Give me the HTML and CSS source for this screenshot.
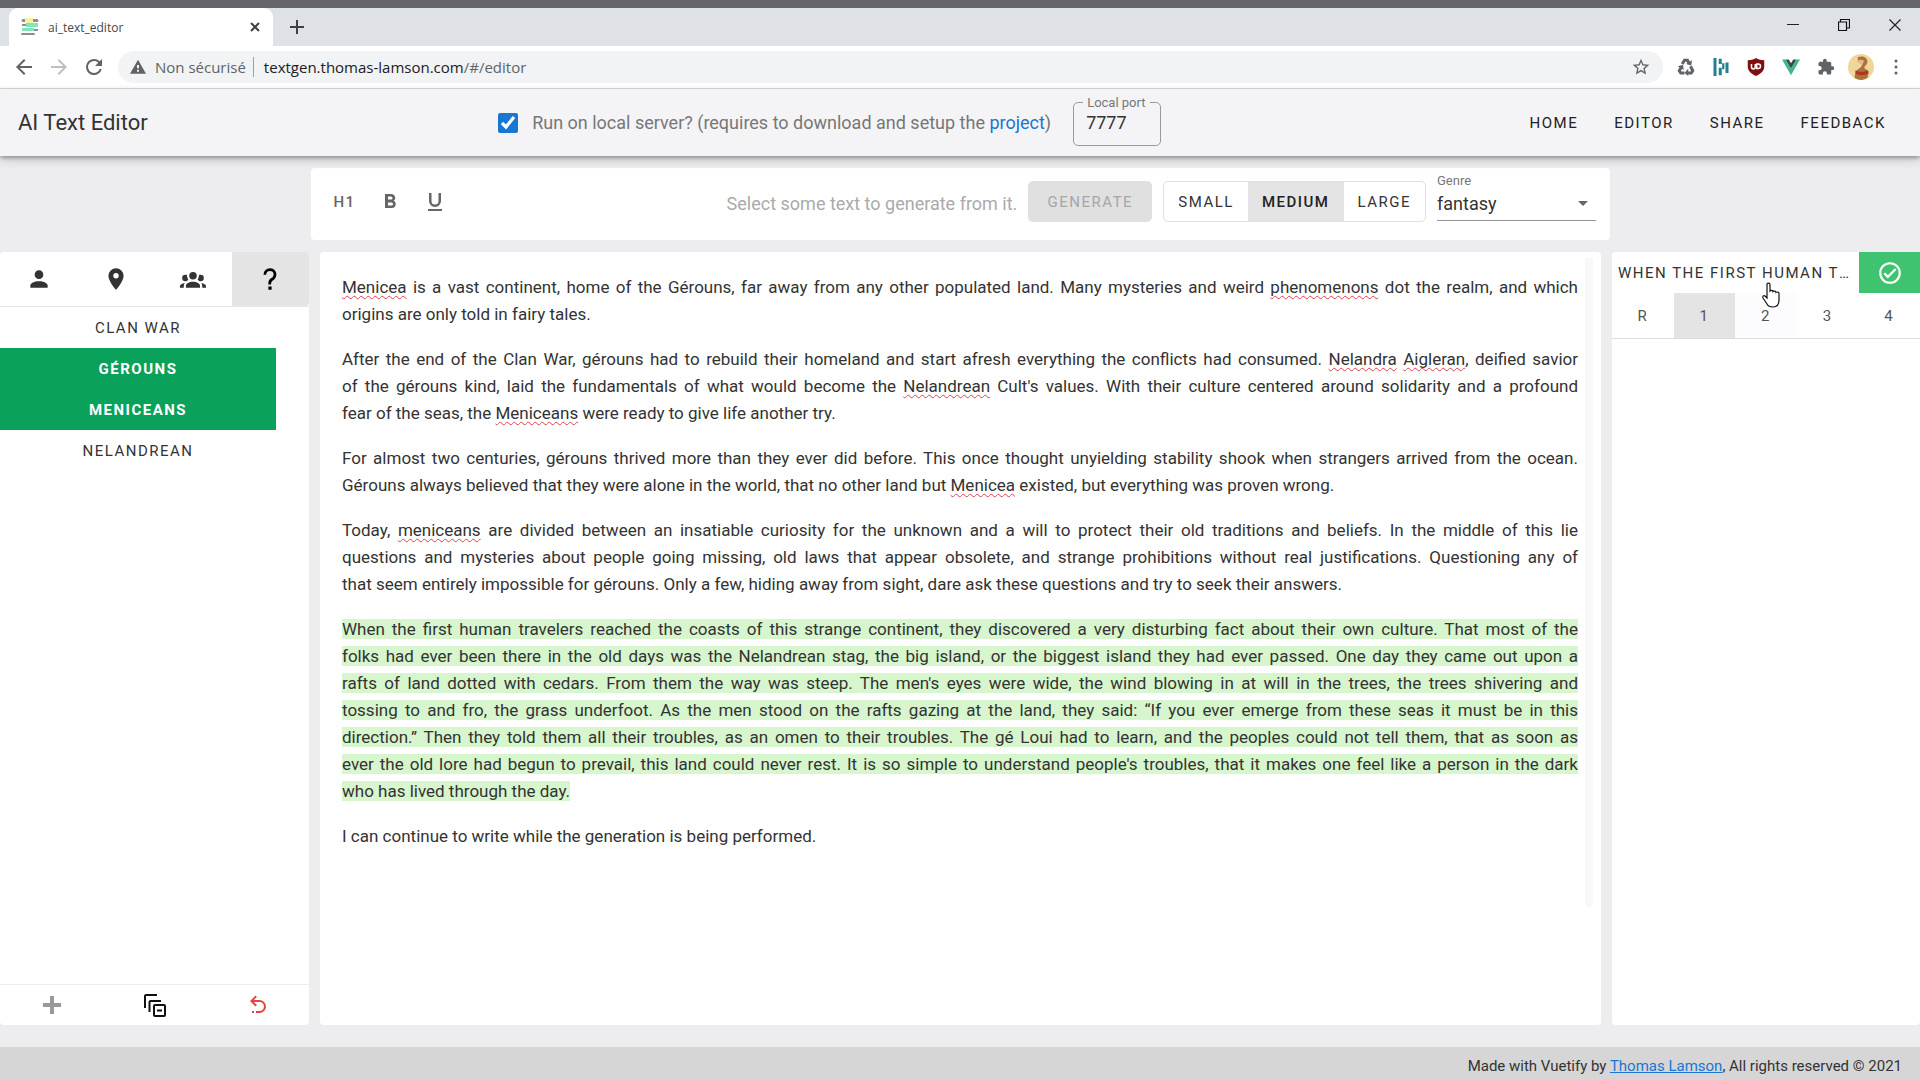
FILE: index.html
```
<!DOCTYPE html>
<html lang="en">
<head>
    <meta charset="UTF-8">
    <meta name="viewport" content="width=device-width, initial-scale=1.0">
    <title>ai_text_editor</title>
    <link rel="stylesheet" href="styles.css">
</head>
<body>

    <!-- Browser window -->
    <div class="browser">
        <div class="tab-strip">
            <div class="tab">
                <svg class="favicon" viewBox="0 0 18 18">
                    <path fill="#8d8f8f" d="M2 1h14a1 1 0 0 1 0 3H2a1 1 0 0 1 0-3zM1 6h15v2H1zM2 11h15v2H2zM1 15h12a1 1 0 0 1 0 2H1a1 1 0 0 1 0-2z"/>
                    <path fill="#f4f3a0" d="M4 0h8v5H4z"/>
                    <path fill="#7fe6bb" d="M5 5h12v4H5zM1 10h12v3H1z"/>
                </svg>
                <span class="tab-title">ai_text_editor</span>
                <button class="chrome-btn" aria-label="Close tab">
                    <svg width="12" height="12" viewBox="0 0 12 12"><path d="M2 2l8 8M10 2l-8 8" stroke="#3c4043" stroke-width="2"/></svg>
                </button>
            </div>
            <button class="chrome-btn new-tab" aria-label="New tab">
                <svg width="14" height="14" viewBox="0 0 14 14"><path d="M7 0v14M0 7h14" stroke="#3c4043" stroke-width="2"/></svg>
            </button>
            <div class="window-controls">
                <button class="chrome-btn" aria-label="Minimize"><svg width="12" height="12" viewBox="0 0 12 12"><path d="M0 5.500h12" stroke="#222" stroke-width="1"/></svg></button>
                <button class="chrome-btn" aria-label="Restore"><svg width="12" height="12" viewBox="0 0 12 12" fill="none" stroke="#111"><path d="M.5 3h8v8.500h-8zM2.500 3V.5h9V9h-3" stroke-width="1.200"/></svg></button>
                <button class="chrome-btn" aria-label="Close"><svg width="12" height="12" viewBox="0 0 12 12"><path d="M.5.5l11 11M11.500.5l-11 11" stroke="#222" stroke-width="1.200"/></svg></button>
            </div>
        </div>
        <div class="address-row">
            <button class="chrome-btn" aria-label="Back"><svg width="24" height="24" viewBox="0 0 24 24" fill="#5f6368"><path d="M20 11H7.830l5.590-5.590L12 4l-8 8 8 8 1.410-1.410L7.830 13H20v-2z"/></svg></button>
            <button class="chrome-btn" aria-label="Forward"><svg width="24" height="24" viewBox="0 0 24 24" fill="#bdc0c4"><path d="M12 4l-1.410 1.410L16.170 11H4v2h12.170l-5.580 5.590L12 20l8-8z"/></svg></button>
            <button class="chrome-btn" aria-label="Reload"><svg width="24" height="24" viewBox="0 0 24 24" fill="#5f6368"><path d="M17.650 6.350A7.950 7.950 0 0 0 12 4a8 8 0 1 0 7.730 10h-2.080A6 6 0 1 1 12 6c1.660 0 3.140.69 4.220 1.780L13 11h7V4l-2.350 2.350z"/></svg></button>
            <div class="url-bar">
                <svg width="16" height="16" viewBox="0 0 24 24" fill="#5f6368"><path d="M0 22h24L12 1 0 22zm13.500-3h-3v-3h3v3zm0-5h-3V9h3v5z"/></svg>
                <span class="insecure">Non sécurisé</span>
                <span class="url">textgen.thomas-lamson.com<span class="url-path">/#/editor</span></span>
                <button class="chrome-btn bookmark" aria-label="Bookmark"><svg width="20" height="20" viewBox="0 0 24 24" fill="#5f6368"><path d="M22 9.240l-7.190-.62L12 2 9.190 8.630 2 9.240l5.460 4.730L5.820 21 12 17.270 18.180 21l-1.630-7.030L22 9.240zM12 15.400l-3.760 2.270 1-4.280-3.320-2.880 4.380-.38L12 6.100l1.710 4.040 4.380.38-3.320 2.880 1 4.280L12 15.400z"/></svg></button>
            </div>
            <div class="extensions">
                <svg viewBox="0 0 24 24" fill="none" stroke="#5f6368" stroke-width="4"><path d="M7 8l3-5h4l2 4M18 11l3 6-2 3h-5M10 20H5l-2-3 3-5"/><path fill="#5f6368" stroke="none" d="M12 8l7 2 1-7zM15 14v10l-5-4zM1 11l7-2 1 7z"/></svg>
                <svg viewBox="0 0 24 24" fill="none" stroke="#23808f" stroke-width="4"><path d="M4 0v24M11 1v7M11 13v10M20 6v14"/><path stroke-width="3" d="M15 7v8"/></svg>
                <svg viewBox="0 0 24 24"><path fill="#800f0f" d="M12 0c3 2 7 3 11 3v8c0 7-5 10-11 13C6 21 1 18 1 11V3c4 0 8-1 11-3z"/><path fill="none" stroke="#fff" stroke-width="2" d="M6 8v4a2 2 0 0 0 5 0V8M13 8v6h2a3 3 0 0 0 0-6z"/></svg>
                <svg viewBox="0 0 24 24"><path fill="#42b883" d="M0 2h5l7 12 7-12h5L12 23z"/><path fill="#35495e" d="M5 2h4l3 5 3-5h4l-7 12z"/></svg>
                <svg viewBox="0 0 24 24" fill="#5f6368"><path d="M20.500 11H19V7a2 2 0 0 0-2-2h-4V3.500a2.500 2.500 0 0 0-5 0V5H4a2 2 0 0 0-2 2v3.800h1.500a2.700 2.700 0 0 1 0 5.400H2V20a2 2 0 0 0 2 2h3.800v-1.500a2.700 2.700 0 0 1 5.400 0V22H17a2 2 0 0 0 2-2v-4h1.500a2.500 2.500 0 0 0 0-5z"/></svg>
                <svg class="avatar" viewBox="0 0 24 24"><circle cx="12" cy="12" r="12" fill="#efd79c"/><path fill="#a9743a" d="M9 3c4-2 9 0 9 4 0 3-3 4-3 6l4 3-1 6c-4 3-9 2-12 0l1-6 5-4 2-4-5-1z"/><path fill="#e8b98a" d="M10 5l5 1-2 4-4-2z"/><path fill="#b5332a" d="M7 15c3 2 7 2 11 0l1 3c-4 2-9 2-12 0z"/></svg>
                <svg viewBox="0 0 24 24" fill="#5f6368"><circle cx="12" cy="4" r="2"/><circle cx="12" cy="12" r="2"/><circle cx="12" cy="20" r="2"/></svg>
            </div>
        </div>
    </div>

    <!-- App bar -->
    <header class="app-bar">
        <h1>AI Text Editor</h1>
        <div class="server">
            <input type="checkbox" id="local" checked>
            <label for="local">Run on local server? (requires to download and setup the <a href="#">project</a>)</label>
            <fieldset class="port">
                <legend><label for="port">Local port</label></legend>
                <input type="text" id="port" value="7777">
            </fieldset>
        </div>
        <nav>
            <a href="#">Home</a>
            <a href="#">Editor</a>
            <a href="#">Share</a>
            <a href="#">Feedback</a>
        </nav>
    </header>

    <!-- Main Content -->
    <main>
        <div class="toolbar">
            <button class="format">H1</button>
            <button class="format" aria-label="Bold"><svg viewBox="0 0 24 24"><path d="M13.500 15.500H10v-3h3.500a1.500 1.500 0 0 1 0 3M10 6.500h3a1.500 1.500 0 0 1 0 3h-3m5.600 1.290c.97-.68 1.650-1.790 1.650-2.790 0-2.260-1.750-4-4-4H7v14h7.040c2.100 0 3.710-1.700 3.710-3.790 0-1.520-.86-2.820-2.150-3.420z"/></svg></button>
            <button class="format" aria-label="Underline"><svg viewBox="0 0 24 24"><path d="M5 21h14v-2H5v2m7-4a6 6 0 0 0 6-6V3h-2.500v8a3.500 3.500 0 0 1-7 0V3H6v8a6 6 0 0 0 6 6z"/></svg></button>
            <span class="hint">Select some text to generate from it.</span>
            <button class="generate" disabled>Generate</button>
            <div class="sizes">
                <button>Small</button>
                <button class="active">Medium</button>
                <button>Large</button>
            </div>
            <div class="genre">
                <label for="genre">Genre</label>
                <select id="genre"><option>fantasy</option></select>
                <svg width="10" height="5" viewBox="0 0 10 5"><path fill="#666" d="M0 0h10L5 5z"/></svg>
            </div>
        </div>

        <aside class="panel entities">
            <div class="entity-tabs">
                <button aria-label="Characters"><svg viewBox="0 0 24 24"><path d="M12 4a4 4 0 1 1 0 8 4 4 0 0 1 0-8m0 10c4.420 0 8 1.790 8 4v2H4v-2c0-2.210 3.580-4 8-4z"/></svg></button>
                <button aria-label="Places"><svg viewBox="0 0 24 24"><path d="M12 11.500A2.500 2.500 0 1 1 12 6.500a2.500 2.500 0 0 1 0 5M12 2a7 7 0 0 0-7 7c0 5.250 7 13 7 13s7-7.750 7-13a7 7 0 0 0-7-7z"/></svg></button>
                <button aria-label="Groups"><svg viewBox="0 0 24 24"><path d="M12 5.500A3.500 3.500 0 0 1 15.500 9a3.500 3.500 0 0 1-3.500 3.500A3.500 3.500 0 0 1 8.500 9 3.500 3.500 0 0 1 12 5.500M5 8c.56 0 1.080.15 1.530.42-.15 1.430.27 2.850 1.130 3.960C7.160 13.340 6.160 14 5 14a3 3 0 0 1-3-3 3 3 0 0 1 3-3m14 0a3 3 0 0 1 3 3 3 3 0 0 1-3 3c-1.160 0-2.160-.66-2.660-1.620a5.540 5.540 0 0 0 1.130-3.960c.45-.27.97-.42 1.530-.42M5.500 18.250c0-2.070 2.910-3.750 6.500-3.750s6.500 1.680 6.500 3.750V20h-13v-1.750M0 20v-1.500c0-1.390 1.890-2.560 4.450-2.900-.59.68-.95 1.620-.95 2.650V20H0m24 0h-3.500v-1.750c0-1.030-.36-1.970-.95-2.650 2.560.34 4.450 1.510 4.450 2.900V20z"/></svg></button>
                <button class="active" aria-label="Other"><svg viewBox="0 0 24 24"><path d="M10.500 19h3v3h-3v-3M12 2c5.300.2 7.700 5.700 4.500 9.700-.8 1-2.200 1.700-2.800 2.500-.7.800-.7 1.800-.7 2.800h-2.500c0-1.700 0-3.100.7-4.100.6-1 2-1.600 2.800-2.300C16.300 8.400 15.700 4.700 12 4.500A3.500 3.500 0 0 0 8.500 8H6a6 6 0 0 1 6-6z"/></svg></button>
            </div>
            <ul>
                <li><button>Clan War</button></li>
                <li><button class="used">Gérouns</button></li>
                <li><button class="used">Meniceans</button></li>
                <li><button>Nelandrean</button></li>
            </ul>
            <div class="entity-actions">
                <button aria-label="Add"><svg viewBox="0 0 24 24" fill="#999"><path d="M21 14h-7v7h-4v-7H3v-4h7V3h4v7h7v4z"/></svg></button>
                <button aria-label="Collapse all"><svg viewBox="0 0 24 24" fill="none" stroke="#111" stroke-width="2"><rect x="11" y="12" width="11" height="11" rx="1"/><path d="M14 17.500h5M6.500 19V9a1 1 0 0 1 1-1H18M2 15V3a1 1 0 0 1 1-1h11"/></svg></button>
                <button aria-label="Undo"><svg viewBox="0 0 24 24" fill="#e0453f"><path d="M13.500 7a6.500 6.500 0 0 1 0 13H10v-2h3.500a4.500 4.500 0 0 0 0-9H7.830l3.080 3.090L9.500 13.500 4 8l5.500-5.500 1.420 1.410L7.830 7h5.670M6 18h2v2H6v-2z"/></svg></button>
            </div>
        </aside>

        <section class="panel editor">
            <article contenteditable="true" spellcheck="false">
                <p>
                    <u>Menicea</u> is a vast continent, home of the Gérouns, far away from any other populated land. Many mysteries and weird <u>phenomenons</u> dot the realm, and which<br>
                    <span class="last">origins are only told in fairy tales.</span>
                </p>
                <p>
                    After the end of the Clan War, gérouns had to rebuild their homeland and start afresh everything the conflicts had consumed. <u>Nelandra</u> <u>Aigleran</u>, deified savior<br>
                    of the gérouns kind, laid the fundamentals of what would become the <u>Nelandrean</u> Cult's values. With their culture centered around solidarity and a profound<br>
                    <span class="last">fear of the seas, the <u>Meniceans</u> were ready to give life another try.</span>
                </p>
                <p>
                    For almost two centuries, gérouns thrived more than they ever did before. This once thought unyielding stability shook when strangers arrived from the ocean.<br>
                    <span class="last">Gérouns always believed that they were alone in the world, that no other land but <u>Menicea</u> existed, but everything was proven wrong.</span>
                </p>
                <p>
                    Today, <u>meniceans</u> are divided between an insatiable curiosity for the unknown and a will to protect their old traditions and beliefs. In the middle of this lie<br>
                    questions and mysteries about people going missing, old laws that appear obsolete, and strange prohibitions without real justifications. Questioning any of<br>
                    <span class="last">that seem entirely impossible for gérouns. Only a few, hiding away from sight, dare ask these questions and try to seek their answers.</span>
                </p>
                <p>
                    <mark>When the first human travelers reached the coasts of this strange continent, they discovered a very disturbing fact about their own culture. That most of the<br>
                    folks had ever been there in the old days was the Nelandrean stag, the big island, or the biggest island they had ever passed. One day they came out upon a<br>
                    rafts of land dotted with cedars. From them the way was steep. The men's eyes were wide, the wind blowing in at will in the trees, the trees shivering and<br>
                    tossing to and fro, the grass underfoot. As the men stood on the rafts gazing at the land, they said: “If you ever emerge from these seas it must be in this<br>
                    direction.” Then they told them all their troubles, as an omen to their troubles. The gé Loui had to learn, and the peoples could not tell them, that as soon as<br>
                    ever the old lore had begun to prevail, this land could never rest. It is so simple to understand people's troubles, that it makes one feel like a person in the dark</mark><br>
                    <span class="last"><mark>who has lived through the day.</mark></span>
                </p>
                <p><span class="last">I can continue to write while the generation is being performed.</span></p>
            </article>
            <div class="scroll-track"></div>
        </section>

        <aside class="panel results">
            <div class="result-head">
                <button class="result-title">When the first human travelers</button>
                <button class="accept" aria-label="Accept"><svg viewBox="0 0 24 24" fill="#fff"><path d="M12 2a10 10 0 1 0 0 20 10 10 0 0 0 0-20m0 18a8 8 0 1 1 0-16 8 8 0 0 1 0 16m4.590-12.420L10 14.170l-2.590-2.580L6 13l4 4 8-8-1.410-1.420z"/></svg></button>
                <svg class="cursor" width="20" height="26" viewBox="0 0 20 26"><path fill="#fff" stroke="#111" stroke-width="1.200" d="M6 2c1-1.500 3-1 3 .8V9c1-1 3-.8 3 .6 1-1 3-.6 3 .8 1-.8 3-.3 3 1.200V18c0 4-2 7-6 7-3 0-5-1-6-3l-4-6c-1-2 1-3 2-2l2 2z"/></svg>
            </div>
            <div class="result-tabs">
                <button>R</button>
                <button class="active">1</button>
                <button class="hovered">2</button>
                <button>3</button>
                <button>4</button>
            </div>
        </aside>
    </main>

    <footer>
        <p>Made with Vuetify by <a href="#">Thomas Lamson</a>, All rights reserved © 2021</p>
    </footer>

</body>
</html>
```
FILE: styles.css
```
/* General Reset */
* {
    margin: 0;
    padding: 0;
    box-sizing: border-box;
}

body {
    background: #ededef;
    color: #333;
    font-family: Roboto, sans-serif;
    font-size: 18px;
    min-height: 100vh;
    display: flex;
    flex-direction: column;
}

button {
    background: none;
    border: none;
    color: inherit;
    font-family: inherit;
    font-size: 15px;
    text-transform: uppercase;
    letter-spacing: 0.1em;
    display: flex;
    align-items: center;
    justify-content: center;
    cursor: pointer;
}

button svg {
    display: block;
}

/* Browser window */
.browser {
    border-top: 8px solid #65656b;
    background: #fff;
    border-bottom: 1px solid #dcdde0;
    font-family: "Open Sans", sans-serif;
}

.tab-strip {
    background: #dee1e6;
    height: 38px;
    padding-left: 9px;
    display: flex;
    align-items: center;
}

.tab {
    align-self: stretch;
    width: 264px;
    background: #fff;
    border-radius: 9px 9px 0 0;
    padding: 0 12px;
    display: flex;
    align-items: center;
    gap: 9px;
}

.favicon {
    width: 18px;
    height: 18px;
}

.tab-title {
    flex: 1;
    font-size: 12px;
    color: #45474a;
}

.new-tab {
    margin-left: 17px;
}

.window-controls {
    margin-left: auto;
    padding: 0 19px 5px 0;
    display: flex;
    gap: 39px;
}

.address-row {
    height: 42px;
    padding: 0 15px 0 12px;
    display: flex;
    align-items: center;
    gap: 11px;
}

.url-bar {
    flex: 1;
    height: 32px;
    background: #f1f3f4;
    border-radius: 16px;
    margin-left: 1px;
    padding: 0 12px;
    display: flex;
    align-items: center;
    font-size: 15px;
}

.insecure {
    color: #5f6368;
    margin-left: 9px;
    padding-right: 7px;
    border-right: 1px solid #9aa0a6;
}

.url {
    color: #202124;
    margin-left: 10px;
}

.url-path {
    color: #5f6368;
}

.bookmark {
    margin-left: auto;
}

.extensions {
    display: flex;
    align-items: center;
    gap: 17px;
    padding-left: 3px;
}

.extensions svg {
    width: 18px;
    height: 18px;
}

.extensions .avatar {
    width: 26px;
    height: 26px;
    margin: 0 -4px;
}

/* App bar */
.app-bar {
    height: 67px;
    background: #f4f4f6;
    box-shadow: 0 2px 4px rgba(0, 0, 0, 0.3), 0 4px 10px rgba(0, 0, 0, 0.15);
    padding: 0 16px 0 18px;
    display: flex;
    justify-content: space-between;
    align-items: center;
    position: relative;
}

h1 {
    font-size: 22px;
    font-weight: 400;
}

.server {
    display: flex;
    align-items: center;
    color: #777;
}

.server a {
    color: #1976d2;
    text-decoration: none;
}

.server input[type="checkbox"] {
    width: 20px;
    height: 20px;
    margin-right: 14px;
    accent-color: #1976d2;
}

.port {
    width: 88px;
    height: 50px;
    margin: 0 0 4px 22px;
    padding: 3px 9px 0;
    border: 1px solid #999;
    border-radius: 5px;
}

.port legend {
    font-size: 13px;
    line-height: 13px;
    padding: 0 4px;
    white-space: nowrap;
}

.port input {
    width: 100%;
    padding-left: 3px;
    border: none;
    background: none;
    font: inherit;
    color: #333;
}

nav {
    display: flex;
}

nav a {
    padding: 0 18px;
    color: #222;
    font-size: 15px;
    letter-spacing: 0.1em;
    text-decoration: none;
    text-transform: uppercase;
}

/* Main Content */
main {
    flex: 1;
    display: grid;
    grid-template-columns: 309px 1fr 308px;
    grid-template-rows: 72px 1fr;
    gap: 12px 11px;
    padding: 12px 0 22px;
}

.panel {
    background: #fff;
    border-radius: 4px;
    grid-row: 2;
}

.toolbar {
    grid-column: 2;
    margin: 0 -9px;
    background: #fff;
    border-radius: 4px;
    padding: 0 14px 5px 11px;
    display: flex;
    align-items: center;
}

.format {
    width: 45px;
    height: 41px;
    color: #666;
    font-weight: 500;
}

.format svg {
    width: 24px;
    height: 24px;
    fill: #666;
}

.hint {
    margin-left: auto;
    padding-top: 4px;
    color: #aaa;
}

.generate {
    width: 124px;
    height: 41px;
    margin: 0 11px;
    border-radius: 5px;
    background: #e0e0e1;
    color: #a6a6a6;
}

.sizes {
    display: flex;
    height: 41px;
    border: 1px solid #e0e0e0;
    border-radius: 5px;
    overflow: hidden;
}

.sizes button {
    padding: 0 14px;
    color: #333;
}

.sizes .active {
    background: #e4e4e4;
    color: #222;
    font-weight: 500;
}

.genre {
    width: 159px;
    margin: 0 0 9px 11px;
    border-bottom: 1px solid #949494;
    position: relative;
}

.genre label {
    display: block;
    font-size: 13px;
    line-height: 14px;
    color: #777;
}

.genre select {
    appearance: none;
    width: 100%;
    height: 32px;
    border: none;
    background: none;
    font: inherit;
    color: #333;
}

.genre svg {
    position: absolute;
    right: 8px;
    bottom: 14px;
    pointer-events: none;
}

/* Entities */
.entities {
    grid-column: 1;
    display: flex;
    flex-direction: column;
}

.entity-tabs {
    display: grid;
    grid-template-columns: repeat(4, 1fr);
    height: 55px;
    border-bottom: 1px solid #e4e4e4;
}

.entity-tabs svg {
    width: 26px;
    height: 26px;
    fill: #333;
}

.entity-tabs .active {
    background: #e4e4e4;
    border-radius: 0 4px 4px 0;
}

.entity-tabs .active svg {
    fill: #000;
}

.entities ul {
    list-style: none;
    flex: 1;
    width: 276px;
}

.entities li button {
    width: 100%;
    height: 41px;
}

.entities .used {
    background: #0aa15b;
    color: #fff;
    font-weight: 700;
}

.entity-actions {
    display: grid;
    grid-template-columns: repeat(3, 1fr);
    height: 41px;
    border-top: 1px solid #ececec;
}

.entity-actions svg {
    width: 24px;
    height: 24px;
}

/* Editor */
.editor {
    grid-column: 2;
    display: flex;
    padding: 5px 8px 0 22px;
}

article {
    flex: 1;
    padding: 17px 7px 0 0;
    font-size: 17px;
    line-height: 27px;
    text-align: justify;
    text-align-last: justify;
    outline: none;
}

article p {
    margin-bottom: 18px;
}

article .last {
    display: block;
    text-align-last: left;
}

article u {
    text-decoration: underline wavy #e04050 1px;
    text-decoration-skip-ink: none;
    text-underline-offset: 2px;
}

mark {
    background: #d7f6cd;
    color: inherit;
}

.scroll-track {
    width: 8px;
    height: 650px;
    background: #f8f8f8;
    border-radius: 4px;
}

/* Results */
.results {
    grid-column: 3;
}

.result-head {
    display: flex;
    height: 41px;
    position: relative;
}

.result-title {
    flex: 1;
    min-width: 0;
    padding: 0 6px;
    display: block;
    overflow: hidden;
    text-overflow: ellipsis;
    white-space: nowrap;
}

.accept {
    width: 61px;
    background: #3fc371;
}

.accept svg {
    width: 26px;
    height: 26px;
}

.cursor {
    position: absolute;
    left: 149px;
    top: 30px;
}

.result-tabs {
    display: grid;
    grid-template-columns: repeat(5, 1fr);
    height: 46px;
    border-bottom: 1px solid #dcdcdf;
}

.result-tabs button {
    color: #555;
}

.result-tabs .active {
    background: #e4e4e4;
}

.result-tabs .hovered {
    background: #fcfcfe;
}

/* Footer */
footer {
    background: #d6d6d6;
    padding: 0 18px;
    font-size: 15px;
    line-height: 38px;
    height: 33px;
    text-align: right;
}

footer a {
    color: #1976d2;
}
```
